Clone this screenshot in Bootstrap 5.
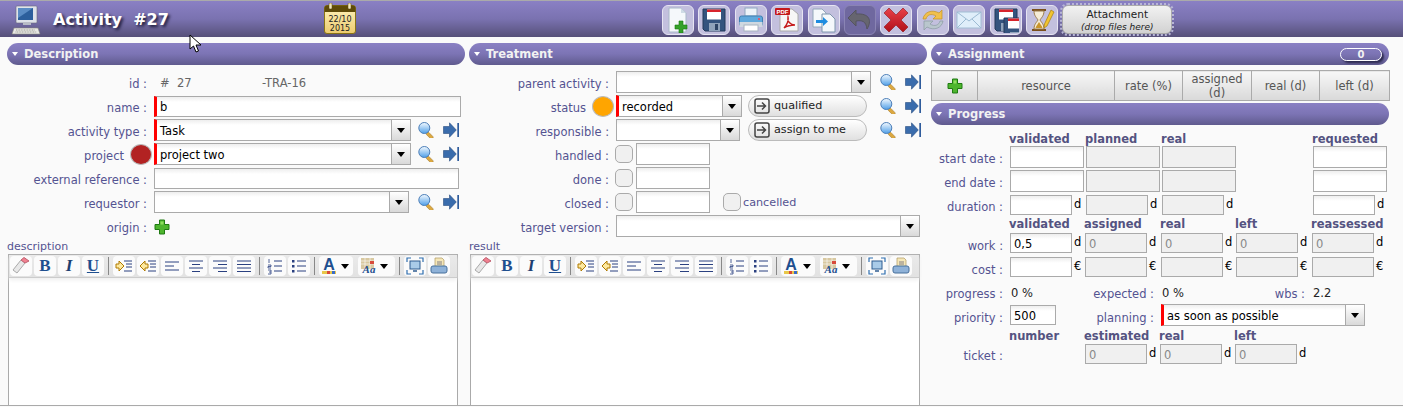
<!DOCTYPE html>
<html lang="en"><head><meta charset="utf-8"><title>Activity #27</title>
<link href="https://cdn.jsdelivr.net/npm/bootstrap@5.3.0/dist/css/bootstrap.min.css" rel="stylesheet">
<style>
html,body{height:407px;overflow:hidden}
body{background:#fafafa;font:11px/14px "DejaVu Sans",Verdana,sans-serif;color:#000;position:relative}
.shell{height:406px;border-bottom:1px solid #aaa;overflow:hidden}
.topbar{height:37px;border-top:1px solid #aaa;padding-top:1px;background:linear-gradient(#8a80c4,#7a72b0 50%,#565079)}
.pcicon{width:32px;height:30px;margin-left:11px}
.ttl{font-size:16px;line-height:20px;font-weight:700;color:#fff;text-shadow:2px 2px 3px #1c1a38;white-space:pre;margin-left:10px;width:271px}
.calicon{width:32px;height:31px;margin-right:306px;margin-top:-2px}
.tbtn{width:32px;height:30px;margin-right:4.4px;padding:0;border:1px solid #e6e4f2;border-radius:6px;background:#c3c0de;display:flex;align-items:center;justify-content:center}
.tbtn:disabled{background:#6f689f;border-color:#8a84b4;opacity:1}
.tbtn svg{width:26px;height:26px}
.attach{width:110px;height:29px;border:1px solid #aaa;outline:2px dotted #b8b6d6;border-radius:6px;background:linear-gradient(#f2f2f2,#d2d2d2);text-align:center;color:#222;font-size:10.5px;line-height:13px;padding-top:2px}
.attach i{display:block;font-size:9px;line-height:12px}
.panes{padding:6px 0 0 7px;gap:4px;height:368px}
.pane{width:458px;flex:none}
.sechead{height:22px;border-radius:11px;background:linear-gradient(#8a80c4,#7c74b4 50%,#5f5a8e);color:#f2f2f2;font-weight:700;font-size:11.5px;line-height:21px;display:flex;align-items:center;padding-left:5px}
.sechead::before{content:"";border:3.5px solid transparent;border-top:4px solid #fff;border-bottom:0;margin-right:6px}
.badgepill{margin-left:auto;margin-right:7px;width:42px;height:13px;border:1px solid #fff;border-radius:7px;text-align:center;line-height:11px;font-size:10px;box-shadow:2px 2px 2px #2d2a50}
.frow{height:24px;display:flex;align-items:center}
.rows{padding-top:5px}
.lab{width:140px;margin-right:7px;text-align:right;color:#545391;white-space:nowrap;flex:none;font-size:11.5px;padding-top:4px}
.lab.withdot{width:117px;margin-right:6px;text-align:right}
.dot{width:22px;height:21px;border-radius:50%;border:1px solid #bbb;margin-right:2px;flex:none}
.fld{height:21px;border:1px solid #aaa;border-radius:0;background:linear-gradient(#eee,#fff 5px);padding:2px 3px 0 5px;font:11.5px/16px "DejaVu Sans",Verdana,sans-serif;color:#000;min-height:0;box-shadow:none;flex:none;display:block}
.fld.req{border-left:3px solid #f00;padding-left:3px}
.fld.ro{background:#f0f0f0;color:#888;padding-left:3px}
.combo{height:22px;display:flex;flex:none;border:1px solid #aaa;background:linear-gradient(#eee,#fff 5px);font-size:11.5px;align-items:stretch}
.combo.req{border-left:3px solid #f00}
.combo span{flex:1;padding-left:3px;line-height:22px}
.combo b{width:19px;border-left:1px solid #aaa;background:linear-gradient(#fff,#d9d9d9);display:flex;align-items:center;justify-content:center}
.combo b::after{content:"";border:4px solid transparent;border-top:5px solid #000;border-bottom:0}
.ic{width:16px;height:16px;flex:none}
.ml-s{margin-left:7px}
.ml-g{margin-left:9px}
.cbx{width:18px;height:18px;border:1px solid #aaa;border-radius:5px;background:#f0f0f0;flex:none;margin-left:-1px;margin-right:3px}
.mv{background:linear-gradient(#fff,#e0e0e0);border:1px solid #bbb;border-radius:11px;height:22px;width:119px;display:flex;align-items:center;padding:0 0 0 5px;color:#222;font-size:11.2px;margin-left:6px;flex:none}
.mv svg{width:16px;height:16px;margin-right:4px}
.canc{color:#545391;padding-top:2px;font-size:11.2px}
.edlabel{height:16px;color:#545391;line-height:17px}
.editor{border:1px solid #aaa;border-bottom:0;width:450px;margin-left:1px;height:152px;background:#fff}
.edbar{height:23px;background:linear-gradient(#eaeaea,#e2e2e2);border-bottom:1px solid #ccc;box-shadow:0 2px 4px #eee;padding-left:1px;display:flex;align-items:center}
.ebtn{width:22px;height:20px;background:#fbfbfb;border-radius:4px;margin-right:2px;flex:none;display:flex;align-items:center;justify-content:center;overflow:hidden;font:700 17px/20px "Liberation Serif",serif;color:#1f4f8f}
.ebtn svg{width:18px;height:18px}
.ebtn.wide{width:34px;margin-right:5px;justify-content:flex-start;padding-left:2px}
.ebtn.wide.w2{width:37px;margin-right:2px}
.ebtn.wide svg{width:16px;height:18px}
.ebtn.wide::after{content:"";border:4px solid transparent;border-top:5px solid #000;border-bottom:0;margin-left:4px}
.esep{width:1px;height:18px;background:#888;margin:0 4px 0 2px;flex:none}
.asg{width:458px;height:30px;margin:5px 0 2px;table-layout:fixed;border-collapse:collapse;--bs-table-bg:transparent}
.asg tr{height:30px}
.asg th{font-weight:400;color:#555;font-size:11.5px;line-height:14px;text-align:center;vertical-align:middle;padding:0;border:1px solid #aaa;background:linear-gradient(#f7f7f7,#d9d9d9)}
.hd,.g1,.g2,.g3{display:grid;align-items:center}
.g1{grid-template-columns:79px 76px 76px 151px 75px;height:24px}
.g2{grid-template-columns:79px 75px 76px 75px 76px 76px;height:24px}
.g3{grid-template-columns:154px 75px 75px 75px;height:24px}
.hd{font-weight:700;color:#545381;white-space:nowrap;margin-left:-1px;font-size:11.5px}
.hd.hh{height:14px}
.hd.hh.g3{height:15px;padding-top:2px}
.hd.tp{margin-top:5px;height:15px;padding-top:2px}
.g1>.lab,.g2>.lab,.g3>.lab{width:72px;margin:0}
.g2>.lab{padding-top:6px}
.cell{display:flex;align-items:center;font-size:11.5px}
.cell .fld{width:62px;height:20px;padding-left:3px}
.cell .fld.wfull,.cell .fld.tall{width:74px;height:22px}
.cell u{text-decoration:none;margin-left:2px;position:relative;top:-1px}
.lab2{color:#545391;text-align:right;padding-right:7px;padding-top:6px;white-space:nowrap;font-size:11.5px}
.val{color:#222;padding-left:1px;padding-top:4px;font-size:11.5px}
.idval{width:108px;padding-left:6px;padding-top:2px;white-space:pre;color:#666;font-size:11.500px;flex:none}
.cursorpt{position:absolute;left:189px;top:34px;width:13px;height:19px}
</style></head><body>
<svg width="0" height="0" class="position-absolute">
<defs>
<linearGradient id="lens" x1="0" y1="0" x2="0" y2="1"><stop offset="0" stop-color="#f4faff"/><stop offset="1" stop-color="#4f9fe8"/></linearGradient>
<symbol id="srch" viewBox="0 0 16 16"><rect x="9" y="10" width="8" height="3.200" rx="1.200" transform="rotate(45 10 11)" fill="#dca840" stroke="#9a7020" stroke-width=".5"/><circle cx="6.300" cy="6" r="5.500" fill="url(#lens)" stroke="#4d7fb8"/></symbol>
<symbol id="go" viewBox="0 0 16 16"><path d="M.5 4.500h6V.8L13.300 8 6.500 15.200V11.500h-6z" fill="#3a6cac" stroke="#264b80" stroke-width=".6"/><rect x="14.300" y="1" width="1.700" height="14" fill="#2f5c9c"/></symbol>
<symbol id="plus" viewBox="0 0 16 16"><path d="M5.500 1h5v4.500H15v5h-4.500V15h-5v-4.500H1v-5h4.500z" fill="#4eb52e" stroke="#1f7a12"/><path d="M6.500 2.500h3v3h-3z" fill="#8ede5e"/></symbol>
<symbol id="trans" viewBox="0 0 16 16"><rect x="1" y="1" width="14" height="14" rx="2" fill="none" stroke="#444" stroke-width="1.500"/><path d="M3 8h8M8 4.500 11.500 8 8 11.500" fill="none" stroke="#444" stroke-width="1.500"/></symbol>
<symbol id="lines" viewBox="0 0 18 18"><path d="M2 4h14M2 7.500h14M2 11h14M2 14.500h14" stroke="#2a4080"/></symbol>
<symbol id="left" viewBox="0 0 18 18"><path d="M2 5h14M2 9h9M2 13h14" stroke="#2a4080"/></symbol>
<symbol id="center" viewBox="0 0 18 18"><path d="M2 4h14M5 7.500h8M2 11h14M5 14.500h8" stroke="#2a4080"/></symbol>
<symbol id="right" viewBox="0 0 18 18"><path d="M2 4h14M7 7.500h9M2 11h14M7 14.500h9" stroke="#2a4080"/></symbol>
<symbol id="indent" viewBox="0 0 18 18"><path d="M9 4h8M11 7h6M11 10h6M9 14h8" stroke="#2a4080"/><path d="M1 7h3V4l5 5-5 5v-3H1z" fill="#fde9a0" stroke="#b07a00"/></symbol>
<symbol id="outdent" viewBox="0 0 18 18"><path d="M9 4h8M11 7h6M11 10h6M9 14h8" stroke="#2a4080"/><path d="M9 7H6V4L1 9l5 5v-3h3z" fill="#fde9a0" stroke="#b07a00"/></symbol>
<symbol id="ol" viewBox="0 0 18 18"><path d="M8 4h8M8 9h8M8 14h8" stroke="#2a4080"/><path d="M3 2v4M2 8h3v1.500H2V11h3M2 13h3v4H2M3 15h2" fill="none" stroke="#2a4080" stroke-width=".8"/></symbol>
<symbol id="ul" viewBox="0 0 18 18"><path d="M7 4h9M7 9h9M7 14h9" stroke="#2a4080"/><path d="M2 3h2.500v2.500H2zM2 8h2.500v2.500H2zM2 13h2.500v2.500H2z" fill="#2a4080"/></symbol>
<symbol id="eraser" viewBox="0 0 18 18"><path d="M1 13 9 3l4 3-8 10z" fill="#e8e8e8" stroke="#aaa"/><path d="M9 3l3-2.500 5 3.500-4 2z" fill="#f08090" stroke="#c06070"/></symbol>
<symbol id="fit" viewBox="0 0 18 18"><path d="M1 5V1h4M13 1h4v4M17 13v4h-4M5 17H1v-4" fill="none" stroke="#2f6fb0" stroke-width="1.200"/><rect x="4" y="4" width="10" height="8" fill="#a9cbe8" stroke="#2f5c90"/><path d="M7 14h4" stroke="#2f5c90" stroke-width="1.500"/></symbol>
<symbol id="prn" viewBox="0 0 18 18"><path d="M5 1h7l2 2v8H5z" fill="#f5e7b8" stroke="#b09a60" stroke-width=".7"/><path d="M7 5h5M7 7h5" stroke="#667" stroke-width=".8"/><rect x="1" y="9" width="16" height="7" rx="2" fill="#8fb2d8" stroke="#47709c"/></symbol>
<symbol id="fontc" viewBox="0 0 16 18"><text x="8" y="13" text-anchor="middle" font-family="Liberation Sans" font-size="16" fill="#1f4f8f">A</text><rect x="1" y="14" width="14" height="3" fill="#e8c84a"/><rect x="6" y="14" width="3" height="3" fill="#d84a3a"/><rect x="11" y="14" width="3" height="3" fill="#3a6cc8"/></symbol>
<symbol id="bgc" viewBox="0 0 16 18"><path d="M1 1h13v11H1z" fill="#d8c8a0"/><path d="M1 4h13M1 7h13M5 1v11M10 1v11" stroke="#fff" stroke-width=".6"/><rect x="10" y="4" width="4" height="3" fill="#d84a3a"/><text x="9" y="16" text-anchor="middle" font-family="Liberation Serif" font-style="italic" font-weight="700" font-size="11" fill="#1f4f8f">Aa</text></symbol>
<symbol id="floppy" viewBox="0 0 26 26"><path d="M2 2h22v22H4l-2-2z" fill="#34547e" stroke="#22385a"/><rect x="6" y="2.500" width="14" height="10" fill="#fff"/><rect x="6" y="2.500" width="14" height="2.500" fill="#d8242c"/><rect x="8" y="16" width="11" height="8" fill="#8fa3ba"/><rect x="14" y="17" width="3" height="6" fill="#2d4464"/></symbol>
<linearGradient id="goldg" x1="0" y1="0" x2="0" y2="1"><stop offset="0" stop-color="#fff3bc"/><stop offset="1" stop-color="#eccb6e"/></linearGradient>
<linearGradient id="redg" x1="0" y1="0" x2="0" y2="1"><stop offset="0" stop-color="#e8404a"/><stop offset="1" stop-color="#b01018"/></linearGradient>
</defs></svg>

<div class="shell">
<header class="topbar d-flex align-items-center">
<svg class="pcicon" viewBox="0 0 32 30"><rect x="5" y="1" width="21" height="17" rx="1" fill="#dfe3ea" stroke="#6a6a7a" stroke-width=".6"/><rect x="7" y="3" width="15" height="12" fill="#2c5f9c"/><path d="M7 3h15L7 13z" fill="#5a8cc4"/><path d="M12 18h8v2h-8z" fill="#b8bcc6"/><path d="M3 23h24l2 6H1z" fill="#e8e8e4" stroke="#88887e" stroke-width=".6"/><path d="M5 25h19M4.500 27h21" stroke="#9a9a92" stroke-dasharray="1 .6"/></svg>
<div class="ttl">Activity  #27</div>
<svg class="calicon" viewBox="0 0 32 31"><rect x=".5" y="2.500" width="31" height="28" rx="2.500" fill="url(#goldg)" stroke="#8a7415"/><path d="M.5 9V5a2.500 2.500 0 0 1 2.500-2.500h26A2.500 2.500 0 0 1 31.500 5v4z" fill="#5e4a08"/><rect x="5" y="0" width="3" height="6" rx="1" fill="#f0e6bc" stroke="#5e4a08" stroke-width=".5"/><rect x="24" y="0" width="3" height="6" rx="1" fill="#f0e6bc" stroke="#5e4a08" stroke-width=".5"/><text x="16" y="18.500" text-anchor="middle" font-family="DejaVu Sans" font-size="8" fill="#222">22/10</text><text x="16" y="28" text-anchor="middle" font-family="DejaVu Sans" font-size="8" fill="#222">2015</text></svg>

<button class="tbtn" type="button" aria-label="new"><svg viewBox="0 0 26 26"><path d="M4 1h12l5 5v19H4z" fill="#f5f8fb" stroke="#a9b8c8"/><path d="M16 1v5h5z" fill="#cfdbe6"/><path d="M14 14h4v4h4v4h-4v4h-4v-4h-4v-4h4z" fill="#35a12a" stroke="#197a10" stroke-width=".6"/></svg></button>
<button class="tbtn" type="button" aria-label="save"><svg viewBox="0 0 26 26"><use href="#floppy"/></svg></button>
<button class="tbtn" type="button" aria-label="print"><svg viewBox="0 0 26 26"><rect x="7" y="1" width="12" height="8" fill="#edf3f9" stroke="#8fa7bf"/><rect x="1.500" y="9" width="23" height="10" rx="2" fill="#60a8dc" stroke="#3f7fb0"/><rect x="1.500" y="15" width="23" height="5" fill="#cfd8e0"/><rect x="6" y="18" width="14" height="6" fill="#fff" stroke="#a8b4c0"/><circle cx="21" cy="12" r="1" fill="#f45"/></svg></button>
<button class="tbtn" type="button" aria-label="pdf"><svg viewBox="0 0 26 26"><path d="M6 2h12l6 5v17H6z" fill="#f7f7f7" stroke="#aaa"/><rect x="1" y="1" width="15" height="7" rx="1" fill="#c51a1a"/><text x="8.500" y="7" text-anchor="middle" font-family="Liberation Sans" font-weight="700" font-size="6" fill="#fff">PDF</text><path d="M10 21c3-3 5-8 4-11-1 4 2 8 7 8-4 0-8 1-11 3z" fill="none" stroke="#c51a1a" stroke-width="1.400"/></svg></button>
<button class="tbtn" type="button" aria-label="copy"><svg viewBox="0 0 26 26"><path d="M2 2h9l4 4v14H2z" fill="#f5f8fb" stroke="#92a6ba"/><path d="M11 7h8l5 5v13H11z" fill="#f5f8fb" stroke="#7f96ad"/><path d="M5 13h7v-3l5 4.500-5 4.500v-3H5z" fill="#1e8ce0"/></svg></button>
<button class="tbtn" type="button" disabled aria-label="undo"><svg viewBox="0 0 26 26"><path d="M9 3 1 11l8 8v-5c6-1 10 0 11 8 5-8 3-16-11-15z" fill="#66656f" stroke="#55545f"/></svg></button>
<button class="tbtn" type="button" aria-label="delete"><svg viewBox="0 0 26 26"><path d="M6 1l7 7 7-7 5 5-7 7 7 7-5 5-7-7-7 7-5-5 7-7-7-7z" fill="url(#redg)" stroke="#8f1218" stroke-width=".6"/></svg></button>
<button class="tbtn" type="button" aria-label="refresh"><svg viewBox="0 0 26 26"><path d="M3 12C4 5 12 2 19 6l3-3v9h-9l3-3c-5-3-9-1-10 3z" fill="#f0c04c" stroke="#c59220" stroke-width=".7"/><path d="M23 14c-1 7-9 10-16 6l-3 3v-9h9l-3 3c5 3 9 1 10-3z" fill="#b9c6cd" stroke="#8a9aa2" stroke-width=".7"/></svg></button>
<button class="tbtn" type="button" aria-label="mail"><svg viewBox="0 0 26 26"><rect x="1" y="5" width="24" height="16" fill="#dfeefa" stroke="#a2bdd4"/><path d="M1 5l12 9 12-9M1 21l9-9M25 21l-9-9" fill="none" stroke="#9cbad2"/></svg></button>
<button class="tbtn" type="button" aria-label="copy save"><svg viewBox="0 0 26 26"><svg x="0" y="0" width="16" height="16" viewBox="0 0 26 26"><use href="#floppy"/></svg><svg x="9" y="9" width="17" height="17" viewBox="0 0 26 26"><use href="#floppy"/></svg></svg></button>
<button class="tbtn" type="button" aria-label="history"><svg viewBox="0 0 26 26"><path d="M3 2h14v2H3zM3 22h14v2H3z" fill="#7a4f1c"/><path d="M5 4h10c0 5-3 7-4 9 1 2 4 4 4 9H5c0-5 3-7 4-9-1-2-4-4-4-9z" fill="#f5ecd6" stroke="#9a7a46"/><path d="M6.500 21c1-3 2.500-4 3.500-6 1 2 2.500 3 3.500 6z" fill="#c9952c"/><path d="M22 3l3 2-7 14-3 2 .5-4z" fill="#f2c530" stroke="#a67d10" stroke-width=".7"/></svg></button>
<div class="attach">Attachment<i>(drop files here)</i></div>
</header>

<main class="d-flex panes">
<section class="pane">
<div class="sechead">Description</div>
<div class="rows">
<div class="frow"><span class="lab">id :</span><span class="idval">#  27</span><span class="idval" style="padding-left:0;width:auto">-TRA-16</span></div>
<div class="frow"><span class="lab">name :</span><input class="fld req form-control" style="width:307px" value="b"></div>
<div class="frow"><span class="lab">activity type :</span><div class="combo req" style="width:257px"><span>Task</span><b></b></div><svg class="ic ml-s"><use href="#srch"/></svg><svg class="ic ml-g"><use href="#go"/></svg></div>
<div class="frow"><span class="lab withdot">project</span><span class="dot" style="background:#b22222"></span><div class="combo req" style="width:257px"><span>project two</span><b></b></div><svg class="ic ml-s"><use href="#srch"/></svg><svg class="ic ml-g"><use href="#go"/></svg></div>
<div class="frow"><span class="lab">external reference :</span><input class="fld form-control" style="width:305px"></div>
<div class="frow"><span class="lab">requestor :</span><div class="combo" style="width:255px"><span></span><b></b></div><svg class="ic ml-g"><use href="#srch"/></svg><svg class="ic ml-g"><use href="#go"/></svg></div>
<div class="frow"><span class="lab">origin :</span><svg class="ic" style="margin-top:2px"><use href="#plus"/></svg></div>
</div>
<div class="edlabel">description</div>
<div class="editor"><div class="edbar">
<span class="ebtn"><svg><use href="#eraser"/></svg></span><span class="ebtn">B</span><span class="ebtn fst-italic" style="color:#1d3f70">I</span><span class="ebtn text-decoration-underline">U</span><span class="esep"></span>
<span class="ebtn"><svg><use href="#indent"/></svg></span><span class="ebtn"><svg><use href="#outdent"/></svg></span><span class="ebtn"><svg><use href="#left"/></svg></span><span class="ebtn"><svg><use href="#center"/></svg></span><span class="ebtn"><svg><use href="#right"/></svg></span><span class="ebtn"><svg><use href="#lines"/></svg></span><span class="esep"></span>
<span class="ebtn"><svg><use href="#ol"/></svg></span><span class="ebtn"><svg><use href="#ul"/></svg></span><span class="esep"></span>
<span class="ebtn wide"><svg><use href="#fontc"/></svg></span><span class="ebtn wide w2"><svg><use href="#bgc"/></svg></span><span class="esep"></span>
<span class="ebtn"><svg><use href="#fit"/></svg></span><span class="ebtn"><svg><use href="#prn"/></svg></span>
</div></div>
</section>

<section class="pane">
<div class="sechead">Treatment</div>
<div class="rows">
<div class="frow"><span class="lab">parent activity :</span><div class="combo" style="width:255px"><span></span><b></b></div><svg class="ic ml-g"><use href="#srch"/></svg><svg class="ic ml-g"><use href="#go"/></svg></div>
<div class="frow"><span class="lab withdot">status</span><span class="dot" style="background:#ffa500"></span><div class="combo req" style="width:126px"><span>recorded</span><b></b></div><button type="button" class="mv"><svg><use href="#trans"/></svg>qualified</button><svg class="ic" style="margin-left:13px"><use href="#srch"/></svg><svg class="ic ml-g"><use href="#go"/></svg></div>
<div class="frow"><span class="lab">responsible :</span><div class="combo" style="width:124px;margin-right:2px"><span></span><b></b></div><button type="button" class="mv"><svg><use href="#trans"/></svg>assign to me</button><svg class="ic" style="margin-left:13px"><use href="#srch"/></svg><svg class="ic ml-g"><use href="#go"/></svg></div>
<div class="frow"><span class="lab">handled :</span><span class="cbx"></span><input class="fld form-control" style="width:74px;height:22px"></div>
<div class="frow"><span class="lab">done :</span><span class="cbx"></span><input class="fld form-control" style="width:74px;height:22px"></div>
<div class="frow"><span class="lab">closed :</span><span class="cbx"></span><input class="fld form-control" style="width:74px;height:22px"><span class="cbx" style="margin-left:13px;margin-right:2px"></span><span class="canc">cancelled</span></div>
<div class="frow"><span class="lab">target version :</span><div class="combo" style="width:304px"><span></span><b></b></div></div>
</div>
<div class="edlabel">result</div>
<div class="editor"><div class="edbar">
<span class="ebtn"><svg><use href="#eraser"/></svg></span><span class="ebtn">B</span><span class="ebtn fst-italic" style="color:#1d3f70">I</span><span class="ebtn text-decoration-underline">U</span><span class="esep"></span>
<span class="ebtn"><svg><use href="#indent"/></svg></span><span class="ebtn"><svg><use href="#outdent"/></svg></span><span class="ebtn"><svg><use href="#left"/></svg></span><span class="ebtn"><svg><use href="#center"/></svg></span><span class="ebtn"><svg><use href="#right"/></svg></span><span class="ebtn"><svg><use href="#lines"/></svg></span><span class="esep"></span>
<span class="ebtn"><svg><use href="#ol"/></svg></span><span class="ebtn"><svg><use href="#ul"/></svg></span><span class="esep"></span>
<span class="ebtn wide"><svg><use href="#fontc"/></svg></span><span class="ebtn wide w2"><svg><use href="#bgc"/></svg></span><span class="esep"></span>
<span class="ebtn"><svg><use href="#fit"/></svg></span><span class="ebtn"><svg><use href="#prn"/></svg></span>
</div></div>
</section>

<section class="pane">
<div class="sechead">Assignment<span class="badgepill">0</span></div>
<table class="asg"><colgroup><col style="width:46px"><col style="width:137px"><col style="width:68px"><col style="width:69px"><col style="width:68px"><col style="width:70px"></colgroup>
<tr><th><svg class="ic"><use href="#plus"/></svg></th><th>resource</th><th>rate (%)</th><th>assigned (d)</th><th>real (d)</th><th>left (d)</th></tr></table>
<div class="sechead">Progress</div>
<div class="hd g1 tp"><span></span><span>validated</span><span>planned</span><span>real</span><span>requested</span></div>
<div class="g1"><span class="lab">start date :</span><div class="cell"><input class="fld wfull form-control"></div><div class="cell"><div class="fld ro tall"></div></div><div class="cell"><div class="fld ro tall"></div></div><div class="cell"><input class="fld wfull form-control"></div></div>
<div class="g1"><span class="lab">end date :</span><div class="cell"><input class="fld wfull form-control"></div><div class="cell"><div class="fld ro tall"></div></div><div class="cell"><div class="fld ro tall"></div></div><div class="cell"><input class="fld wfull form-control"></div></div>
<div class="g1"><span class="lab">duration :</span><div class="cell"><input class="fld form-control"><u>d</u></div><div class="cell"><div class="fld ro"></div><u>d</u></div><div class="cell"><div class="fld ro"></div><u>d</u></div><div class="cell"><input class="fld form-control"><u>d</u></div></div>
<div class="hd hh g2"><span></span><span>validated</span><span>assigned</span><span>real</span><span>left</span><span>reassessed</span></div>
<div class="g2"><span class="lab">work :</span><div class="cell"><input class="fld form-control" value="0,5"><u>d</u></div><div class="cell"><div class="fld ro">0</div><u>d</u></div><div class="cell"><div class="fld ro">0</div><u>d</u></div><div class="cell"><div class="fld ro">0</div><u>d</u></div><div class="cell"><div class="fld ro">0</div><u>d</u></div></div>
<div class="g2"><span class="lab">cost :</span><div class="cell"><input class="fld form-control"><u>€</u></div><div class="cell"><div class="fld ro"></div><u>€</u></div><div class="cell"><div class="fld ro"></div><u>€</u></div><div class="cell"><div class="fld ro"></div><u>€</u></div><div class="cell"><div class="fld ro"></div><u>€</u></div></div>
<div class="g2"><span class="lab">progress :</span><span class="val">0 %</span><span class="lab2">expected :</span><span class="val">0 %</span><span class="lab2">wbs :</span><span class="val">2.2</span></div>
<div class="g2"><span class="lab">priority :</span><div class="cell"><input class="fld form-control" style="width:46px" value="500"></div><span class="lab2">planning :</span><div class="cell" style="grid-column:span 3"><div class="combo req" style="width:204px"><span>as soon as possible</span><b></b></div></div></div>
<div class="hd hh g3"><span style="padding-left:79px">number</span><span>estimated</span><span>real</span><span>left</span></div>
<div class="g3"><span class="lab">ticket :</span><div class="cell"><div class="fld ro">0</div><u>d</u></div><div class="cell"><div class="fld ro">0</div><u>d</u></div><div class="cell"><div class="fld ro">0</div><u>d</u></div></div>
</section>
</main>
</div>
<svg class="cursorpt" viewBox="0 0 13 19"><path d="M1 1v14l3.500-3 2.500 6 2.500-1-2.500-6H12z" fill="#fff" stroke="#000"/></svg>
</body></html>
